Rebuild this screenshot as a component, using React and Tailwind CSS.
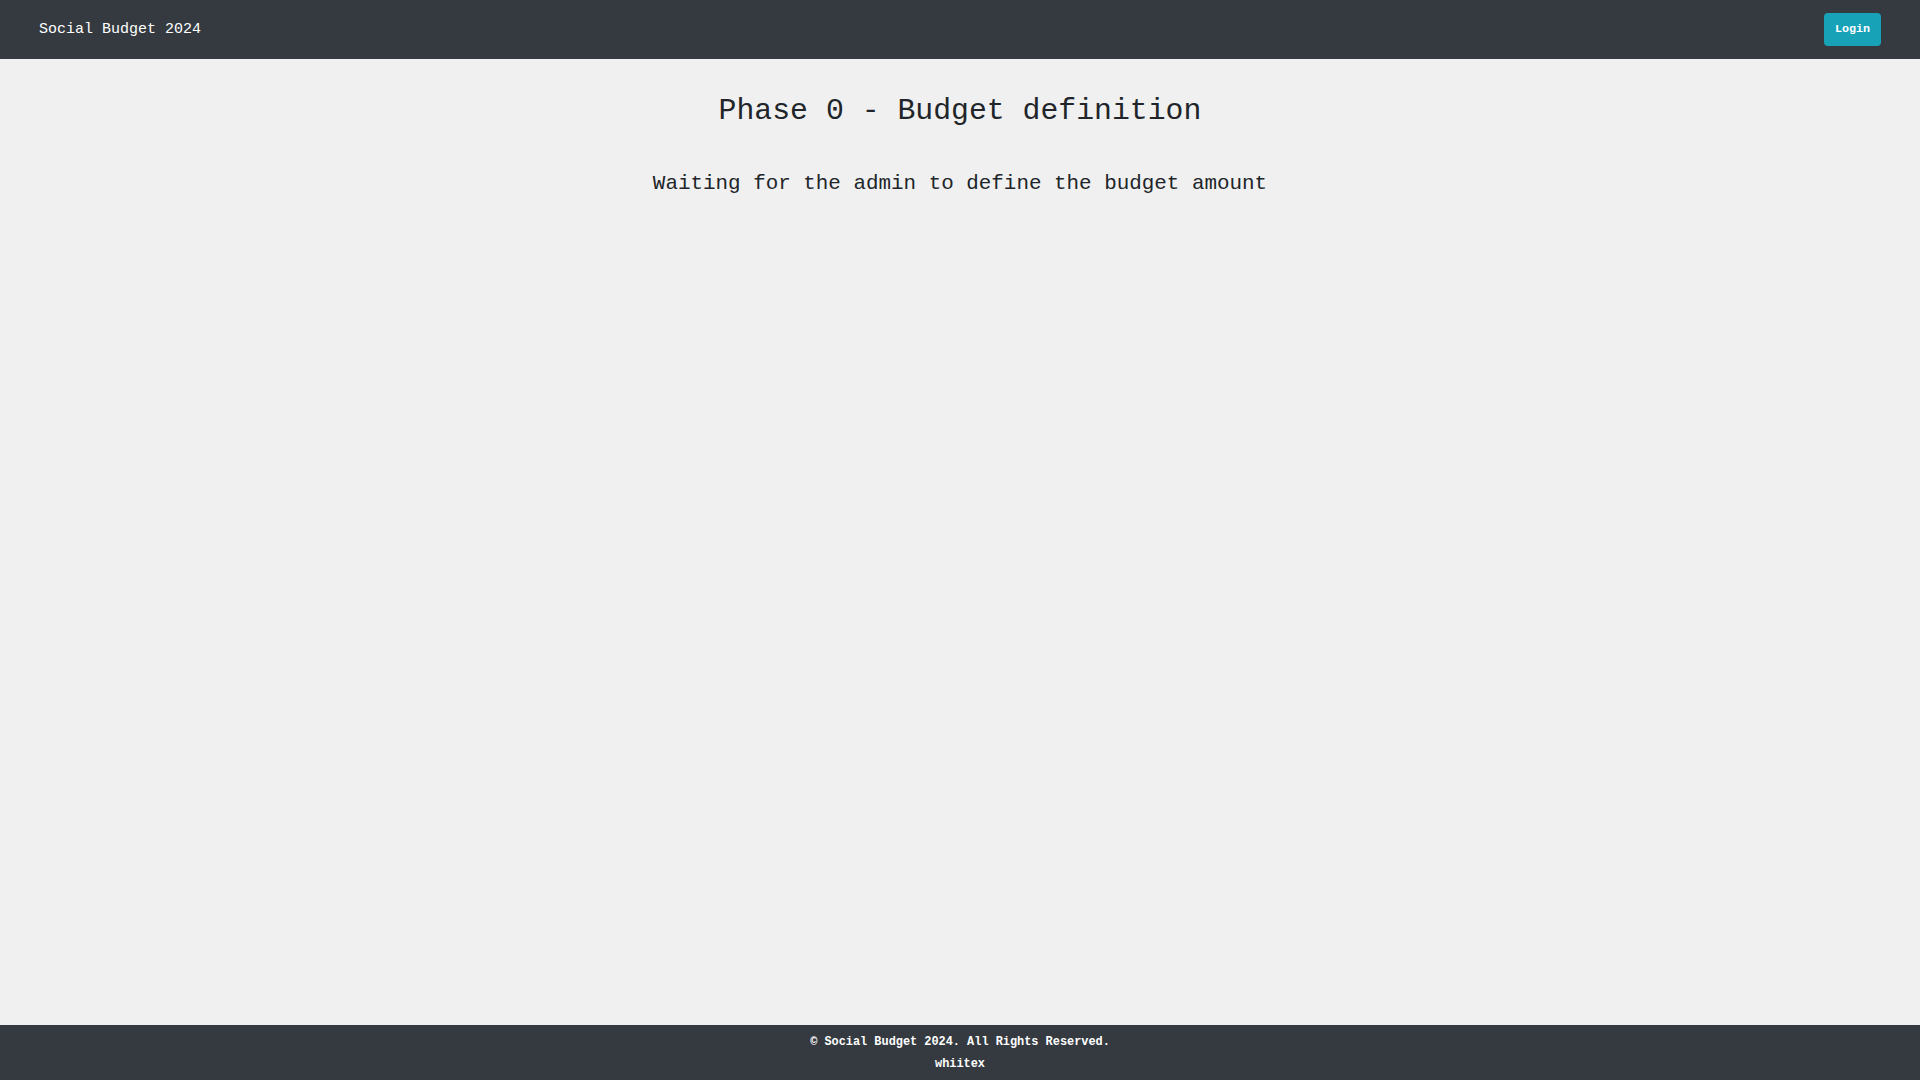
export default function App() {
  const mono = { fontFamily: '"Liberation Mono", "DejaVu Sans Mono", monospace' };
  return (
    <div className="min-h-screen flex flex-col bg-[#f0f0f0] text-[#212529]" style={mono}>
      {/* Navbar */}
      <nav className="h-[59px] bg-[#343a40] flex items-center justify-between pl-[39px] pr-[39px]">
        <span className="text-[15px] text-white leading-none">Social Budget 2024</span>
        <button className="h-[33px] w-[57px] rounded-[4px] bg-[#17a2b8] text-white text-[11.7px] font-bold">
          Login
        </button>
      </nav>

      {/* Content */}
      <main className="flex-1 flex flex-col items-center pt-[34px]">
        <h1 className="text-[29.8px] leading-[36px]">Phase 0 - Budget definition</h1>
        <p className="mt-[41px] text-[20.9px] leading-[28px]">
          Waiting for the admin to define the budget amount
        </p>
      </main>

      {/* Footer */}
      <footer className="h-[55px] bg-[#343a40] text-white flex flex-col items-center pt-[8px] gap-[4px]">
        <span className="text-[11.9px] leading-[18px] font-bold">© Social Budget 2024. All Rights Reserved.</span>
        <span className="text-[11.9px] leading-[18px] font-bold">whiitex</span>
      </footer>
    </div>
  );
}
